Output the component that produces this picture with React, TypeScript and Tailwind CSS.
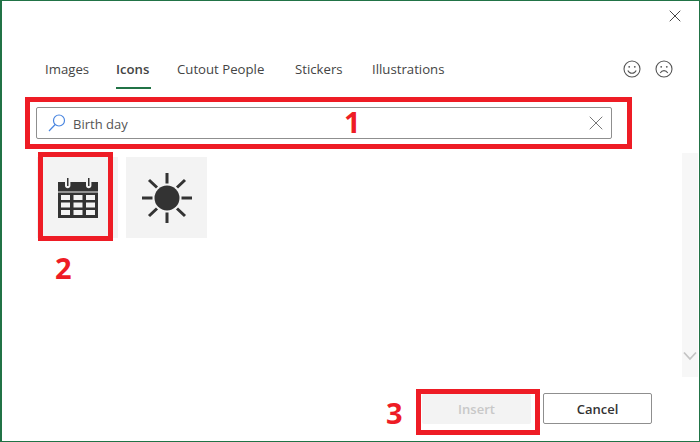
import { X } from "lucide-react";

const tabs = ["Images", "Icons", "Cutout People", "Stickers", "Illustrations"];
const tabWidths = ["w-[45px]", "w-[35px]", "w-[92px]", "w-[51px]", "w-[72px]"];

function Face({ sad }: { sad?: boolean }) {
  return (
    <svg width="18" height="18" viewBox="0 0 18 18" fill="none" stroke="#555" strokeWidth="1.1">
      <circle cx="9" cy="9" r="8" />
      <circle cx="6.2" cy="6.8" r="0.9" fill="#555" stroke="none" />
      <circle cx="11.8" cy="6.8" r="0.9" fill="#555" stroke="none" />
      {sad ? <path d="M5.2 13c1-1.7 2.3-2.4 3.8-2.4s2.8.7 3.8 2.4" /> : <path d="M4.8 10.5c.9 1.9 2.4 2.8 4.2 2.8s3.3-.9 4.2-2.8" />}
    </svg>
  );
}

function Calendar() {
  return (
    <svg width="40" height="40" viewBox="0 0 40 40">
      <rect x="0" y="4" width="40" height="9.500" fill="#333" />
      <path d="M7 3v4.500c0 3.600 5.400 3.600 5.400 0V3zM28 3v4.500c0 3.600 5.400 3.600 5.400 0V3z" fill="#f3f3f3" />
      <path d="M9 0h1.500v8H9zM30 0h1.500v8H30z" fill="#333" />
      <path
        fill="#333"
        fillRule="evenodd"
        d="M0 14.500h40V40H0zM3 17v5h9v-5zM15.500 17v5h9v-5zM28 17v5h9v-5zM3 24.500v5h9v-5zM15.500 24.500v5h9v-5zM28 24.500v5h9v-5zM3 32v5h9v-5zM15.500 32v5h9v-5zM28 32v5h9v-5z"
      />
    </svg>
  );
}

function Sun() {
  return (
    <svg width="50" height="50" viewBox="0 0 50 50" fill="#333" stroke="#333">
      <circle cx="25" cy="25" r="12.500" stroke="none" />
      <g strokeWidth="3" fill="none">
        <path d="M25 0v10.500M25 39.500v10.500M0 25h10.500M39.500 25h10.500M7 7l8 7.500M43 7l-8 7.500M7 43l8-7.500M43 43l-8-7.500" />
      </g>
    </svg>
  );
}

export default function App() {
  return (
    <div className="relative flex h-[442px] w-[700px] flex-col border border-l-2 border-[#217346] bg-white font-['Open_Sans','Noto_Sans',sans-serif] text-[#444]">
      <div className="flex h-[30px] justify-end pr-[14px] pt-[5px]">
        <X size={20} strokeWidth={1.100} className="text-[#333]" />
      </div>

      <div className="flex h-[61px] items-start pl-[43px] pr-[26px] pt-[28px]">
        <div className="flex gap-[26px] text-[13.2px] leading-[20px]">
          {tabs.map((t, i) => (
            <div key={t} className={`flex h-[30px] flex-col ${tabWidths[i]}`}>
              <span className={t === "Icons" ? "whitespace-nowrap font-semibold" : "whitespace-nowrap"}>{t}</span>
              {t === "Icons" && <div className="mt-[8px] h-[2px] w-[35px] bg-[#217346]" />}
            </div>
          ))}
        </div>
        <div className="ml-auto flex gap-[14px] pt-[1px]">
          <Face />
          <Face sad />
        </div>
      </div>

      <div className="ml-[34px] mt-[15px] flex h-[32px] w-[576px] items-center rounded-[2px] border border-[#8f8f8f] pl-[11px] pr-[3px]">
        <svg width="18" height="18" viewBox="0 0 18 18" fill="none" stroke="#4a86e0" strokeWidth="1.200">
          <circle cx="11" cy="6.500" r="5.500" />
          <path d="M7.200 10.500L1 17" />
        </svg>
        <span className="ml-[7px] pt-[3px] text-[13px] text-[#555]">Birth day</span>
        <X size={24} strokeWidth={1} className="ml-auto text-[#777]" />
      </div>

      <div className="flex flex-1 pl-[35px] pt-[18px]">
        <div className="flex gap-[8px]">
          <div className="flex h-[81px] w-[81px] items-center justify-center bg-[#f3f3f3]">
            <Calendar />
          </div>
          <div className="flex h-[81px] w-[81px] items-center justify-center bg-[#f3f3f3]">
            <Sun />
          </div>
        </div>
        <div className="-mt-[4px] ml-auto mr-[1px] flex h-[224px] w-[16px] items-end justify-center bg-[#f7f7f7] pb-[16px]">
          <svg width="14" height="10" viewBox="0 0 14 10" fill="none" stroke="#c4c4c4" strokeWidth="1.800">
            <path d="M1 1.500l6 6.500 6-6.500" />
          </svg>
        </div>
      </div>

      <div className="flex items-start justify-end gap-[12px] pb-[17px] pr-[47px]">
        <button type="button" className="mt-[1px] h-[30px] w-[109px] rounded-[2px] bg-[#f3f3f3] pt-[2px] text-[13px] font-semibold text-[#c8c8c8]">
          Insert
        </button>
        <button type="button" className="h-[31px] w-[109px] rounded-[2px] border border-[#8f8f8f] bg-white pt-[2px] text-[13px] font-semibold text-[#333]">
          Cancel
        </button>
      </div>

      {/* red annotations */}
      <div className="absolute left-[23px] top-[96px] h-[52px] w-[607px] border-[5px] border-[#ee1c25]" />
      <div className="absolute left-[36px] top-[151px] h-[89px] w-[75px] border-[5px] border-[#ee1c25]" />
      <div className="absolute left-[414px] top-[388px] h-[46px] w-[124px] border-[5px] border-[#ee1c25]" />
      <span className="absolute left-[342px] top-[103px] text-[29px] font-bold leading-[36px] text-[#ee1c25]">1</span>
      <span className="absolute left-[53px] top-[249px] text-[29px] font-bold leading-[36px] text-[#ee1c25]">2</span>
      <span className="absolute left-[384px] top-[394px] text-[29px] font-bold leading-[36px] text-[#ee1c25]">3</span>
    </div>
  );
}
